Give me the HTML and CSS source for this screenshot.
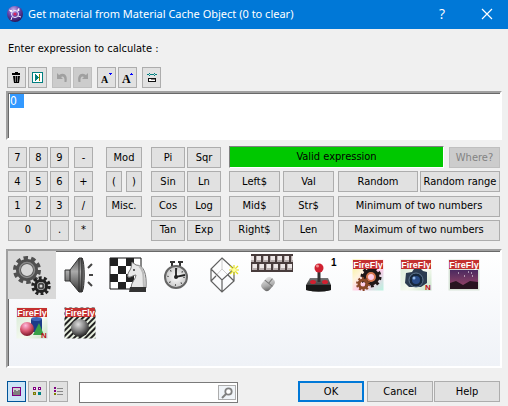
FILE: index.html
```html
<!DOCTYPE html>
<html lang="en">
<head>
<meta charset="utf-8">
<title>Get material from Material Cache Object (0 to clear)</title>
<link rel="stylesheet" href="styles.css">
</head>
<body>
<header class="titlebar">
  <svg class="app-icon" width="16" height="16" viewBox="0 0 16 16" aria-hidden="true">
    <defs><radialGradient id="orb" cx=".4" cy=".25" r=".8"><stop offset="0" stop-color="#c9b6ee"/><stop offset=".45" stop-color="#6a48b0"/><stop offset="1" stop-color="#25104f"/></radialGradient></defs>
    <circle cx="8" cy="8" r="8" fill="url(#orb)"/>
    <g fill="none" stroke="#f0e8ff" stroke-width="1"><circle cx="8" cy="8" r="3.500"/><path d="M5 5L2 4M11 5l1-3M11 10l3 1M5 11l-1 3"/></g>
    <circle cx="8" cy="8" r="1.600" fill="#d8265a"/><circle cx="4" cy="5" r="1.100" fill="#fff"/><circle cx="11.500" cy="4" r="1.100" fill="#fff"/>
  </svg>
  <h1 class="title">Get material from Material Cache Object (0 to clear)</h1>
  <button class="caption" aria-label="Context help">?</button>
  <button class="caption" aria-label="Close"><svg width="12" height="12" viewBox="0 0 12 12"><path d="M1 1l10 10M11 1L1 11" stroke="#fff" stroke-width="1.200"/></svg></button>
</header>
<main class="dialog">
  <label class="prompt" for="expr">Enter expression to calculate :</label>
  <div class="toolbar">
    <button class="btn tool" aria-label="Clear"><svg width="12" height="12" viewBox="0 0 12 12"><path d="M4 0h3v1h2v2H1V1h3zM2 4h7l-1 7H3z" fill="#000"/><path d="M4.500 4v6M6.500 4v6" stroke="#aaa" stroke-width=".7"/></svg></button>
    <button class="btn tool" aria-label="Insert"><svg width="11" height="11" viewBox="0 0 11 11" shape-rendering="crispEdges"><path d="M.5.500h10v10H.5z" fill="#fff" stroke="#008080"/><path d="M3 2h1v1h1v1h1v1h1v1H6v1H5v1H4v1H3z" fill="#008080"/><path d="M7 2h1v7H7z" fill="#808000"/></svg></button>
    <button class="btn tool apart" disabled aria-label="Undo"><svg width="12" height="12" viewBox="0 0 12 12"><path d="M1 1v6h6L5 5c2-1.500 4 0 3.500 5h2C12 3 8 0 3 3z" fill="#a0a0a0"/></svg></button>
    <button class="btn tool" disabled aria-label="Redo"><svg width="12" height="12" viewBox="0 0 12 12"><path d="M11 1v6H5l2-2C5 3.500 3 5 3.500 10h-2C0 3 4 0 9 3z" fill="#a0a0a0"/></svg></button>
    <button class="btn tool apart" aria-label="Smaller font"><svg width="17" height="19" viewBox="0 0 17 19"><text x="3" y="15" class="glyph">A</text><path d="M11 5h3v1h-1v1h-1V6h-1z" fill="#00f"/></svg></button>
    <button class="btn tool" aria-label="Larger font"><svg width="17" height="19" viewBox="0 0 17 19"><text x="3" y="15" class="glyph big">A</text><path d="M11 6h1V5h1v1h1v1h-3z" fill="#00f"/></svg></button>
    <button class="btn tool apart" aria-label="Insert field"><svg width="10" height="11" viewBox="0 0 10 11" shape-rendering="crispEdges"><path d="M1 3h8v-1H1zM2 1h1v3H2zM7 1h1v3H7zM0 2h1v1H0zM9 2h1v1H9z" fill="#008080"/><path d="M1.500 6.500h7v3h-7z" fill="#fff" stroke="#111"/><path d="M4 7h4v1H4z" fill="#888"/></svg></button>
  </div>
  <textarea class="sunken expr" id="expr" spellcheck="false" autofocus>0  </textarea>

  <section class="keypad" aria-label="Calculator keys">
    <div class="keys digits">
      <button class="btn">7</button><button class="btn">8</button><button class="btn">9</button>
      <button class="btn">4</button><button class="btn">5</button><button class="btn">6</button>
      <button class="btn">1</button><button class="btn">2</button><button class="btn">3</button>
      <button class="btn wide">0</button><button class="btn">.</button>
    </div>
    <div class="keys ops"><button class="btn">-</button><button class="btn">+</button><button class="btn">/</button><button class="btn">*</button></div>
    <div class="keys misc"><button class="btn wide">Mod</button><button class="btn">(</button><button class="btn">)</button><button class="btn wide">Misc.</button></div>
    <div class="keys trig">
      <button class="btn">Pi</button><button class="btn">Sqr</button>
      <button class="btn">Sin</button><button class="btn">Ln</button>
      <button class="btn">Cos</button><button class="btn">Log</button>
      <button class="btn">Tan</button><button class="btn">Exp</button>
    </div>
    <div class="functions">
      <div class="row"><output class="status">Valid expression</output><button class="btn where" disabled>Where?</button></div>
      <div class="row"><button class="btn str">Left$</button><button class="btn str">Val</button><span class="pair"><button class="btn">Random</button><button class="btn">Random range</button></span></div>
      <div class="row"><button class="btn str">Mid$</button><button class="btn str">Str$</button><span class="pair"><button class="btn">Minimum of two numbers</button></span></div>
      <div class="row"><button class="btn str">Right$</button><button class="btn str">Len</button><span class="pair"><button class="btn">Maximum of two numbers</button></span></div>
    </div>
  </section>

  <section class="sunken objects" aria-label="Objects">
    <svg class="defs" width="0" height="0" aria-hidden="true"><defs>
      <linearGradient id="steel" x1="0" y1="0" x2="1" y2="1"><stop offset="0" stop-color="#eee"/><stop offset=".6" stop-color="#aaa"/><stop offset="1" stop-color="#555"/></linearGradient>
      <linearGradient id="dark" x1="0" y1="0" x2="0" y2="1"><stop offset="0" stop-color="#777"/><stop offset="1" stop-color="#111"/></linearGradient>
      <linearGradient id="cone" x1="0" y1="0" x2="0" y2="1"><stop offset="0" stop-color="#555"/><stop offset=".4" stop-color="#aaa"/><stop offset="1" stop-color="#333"/></linearGradient>
      <linearGradient id="rainbow" x1="0" y1="0" x2="1" y2="1"><stop offset="0" stop-color="#f4f08a"/><stop offset=".35" stop-color="#fff4dc"/><stop offset=".6" stop-color="#ffc8e8"/><stop offset="1" stop-color="#b8f4e0"/></linearGradient>
      <linearGradient id="mint" x1="0" y1="0" x2="1" y2="1"><stop offset="0" stop-color="#d4e8d4"/><stop offset=".6" stop-color="#f6faf0"/><stop offset="1" stop-color="#c4e0c4"/></linearGradient>
      <linearGradient id="dusk" x1="0" y1="0" x2="0" y2="1"><stop offset="0" stop-color="#4a2a60"/><stop offset="1" stop-color="#a04868"/></linearGradient>
      <radialGradient id="ball" cx=".4" cy=".3" r=".7"><stop offset="0" stop-color="#ddd"/><stop offset=".5" stop-color="#888"/><stop offset="1" stop-color="#222"/></radialGradient>
      <radialGradient id="pink" cx=".4" cy=".25" r=".8"><stop offset="0" stop-color="#fbd"/><stop offset=".5" stop-color="#d85870"/><stop offset="1" stop-color="#701020"/></radialGradient>
      <radialGradient id="face"><stop offset="0" stop-color="#fff"/><stop offset="1" stop-color="#c8c8c8"/></radialGradient>
      <pattern id="stripes" width="4" height="4" patternUnits="userSpaceOnUse" patternTransform="rotate(45)"><path d="M0 0h4v4H0z" fill="#e8f0e0"/><path d="M0 0h2v4H0z" fill="#222"/></pattern>
      <pattern id="keytop" width="7" height="8" patternUnits="userSpaceOnUse" patternTransform="translate(-3 1)"><path d="M0 0h7v8H0z" fill="#483c3c"/><path d="M1 1h5v6H1z" fill="#b8aeae"/><path d="M2 1h4v4H2z" fill="#ece6e6"/></pattern>
      <pattern id="keylow" width="7" height="8" patternUnits="userSpaceOnUse" patternTransform="translate(0 1)"><path d="M0 0h7v8H0z" fill="#483c3c"/><path d="M1 1h5v6H1z" fill="#b8aeae"/><path d="M2 1h4v4H2z" fill="#ece6e6"/></pattern>
      <symbol id="banner" viewBox="0 0 32 32"><path d="M1 1h30v9H1z" fill="#c43030"/><text x="16" y="9" text-anchor="middle" class="brand">FireFly</text></symbol>
    </defs></svg>

    <button class="cell selected" aria-label="Settings"><svg width="40" height="40" viewBox="0 0 40 40">
      <g fill="none"><circle cx="15" cy="15" r="8.500" stroke="#505050" stroke-width="5"/><circle cx="15" cy="15" r="12" stroke="#505050" stroke-width="4" stroke-dasharray="4.400 3.140"/><circle cx="15" cy="15" r="7.500" stroke="#8a8a8a" stroke-width="1.500"/>
      <circle cx="29" cy="31" r="5.500" stroke="#222" stroke-width="3"/><circle cx="29" cy="31" r="8" stroke="#222" stroke-width="3.500" stroke-dasharray="2.900 2.130"/><circle cx="29" cy="31" r="2.500" stroke="#444" stroke-width="2"/></g></svg></button>
    <button class="cell" aria-label="Sound"><svg width="32" height="36" viewBox="0 0 32 36">
      <path d="M1 13h5L15 1h3v34h-3L6 24H1z" fill="url(#cone)" stroke="#333"/><path d="M6 13v11" stroke="#222"/><path d="M15 1v34" stroke="#333"/><path d="M18 1c3 4 3 30 0 34z" fill="#777" stroke="#333"/>
      <path d="M24 11l4-4M25 18h4M24 25l4 4" stroke="#444" stroke-width="2"/></svg></button>
    <button class="cell" aria-label="Chess board"><svg width="38" height="36" viewBox="0 0 38 36">
      <path d="M1 1h31v31H1z" fill="#fff" stroke="#111"/><path d="M1 1h8v8H1zM17 1h8v8h-8zM9 9h8v8H9zM25 9h7v8h-7zM1 17h8v8H1zM17 17h8v8h-8zM9 25h8v7H9z" fill="#222"/>
      <path d="M22 31c0-6 5-9 5-13-3 0-5 3-8 2-1-4 2-6 3-9l1-6 4 3c8 0 11 9 10 23z" fill="#e8e8e8" stroke="#777"/><path d="M30 9c6 5 4 12 5 21" stroke="#bbb" stroke-width="2" fill="none"/><circle cx="25" cy="13" r="1" fill="#333"/><path d="M21 30h16v5H20z" fill="#333"/></svg></button>
    <button class="cell" aria-label="Timer"><svg width="26" height="28" viewBox="0 0 26 28">
      <path d="M7 1h5M15 1h5M9 1v4M17 1v4" stroke="#333" stroke-width="2"/><circle cx="13" cy="16" r="11" fill="url(#face)" stroke="#666" stroke-width="2"/><circle cx="13" cy="16" r="8" fill="none" stroke="#333" stroke-width="1.500" stroke-dasharray="1 5.280"/><path d="M13 7v9l9-2" fill="none" stroke="#222" stroke-width="1.800"/><circle cx="13" cy="16" r="2" fill="#222"/></svg></button>
    <button class="cell" aria-label="3D shape"><svg width="30" height="36" viewBox="0 0 30 36">
      <path d="M13 12L2 24M13 12l12 12M13 1v11" stroke="#ccc"/><path d="M13 1l12 11v12L13 35 2 24V12zM2 12l11 11 12-11M13 23v12M2 24l5-5M25 24l-6-6" fill="none" stroke="#606060" stroke-width="1.200"/><path d="M25 8v10M20 13h10M21 9l8 8M29 9l-8 8" stroke="#e4e020" stroke-width="1.200"/><circle cx="25" cy="13" r="2" fill="#ffffa0"/></svg></button>
    <button class="cell" aria-label="Keyboard and mouse"><svg width="42" height="42" viewBox="0 0 42 42">
      <path d="M0 1h42v8H0z" fill="url(#keytop)"/><path d="M0 9h42v9H0z" fill="url(#keylow)"/><path d="M0 0h42v1H0zM0 17h42v1H0z" fill="#483c3c"/>
      <g transform="rotate(40 17 30)"><rect x="12" y="23" width="10" height="14" rx="4" fill="url(#steel)"/><path d="M12 29h10M17 23v6" stroke="#777"/></g></svg></button>
    <button class="cell" aria-label="Joystick 1"><svg width="34" height="36" viewBox="0 0 34 36">
      <path d="M7 21h18l3 7v5q-12 3-25 0v-5z" fill="url(#dark)"/><path d="M3 28h25v5q-12 3-25 0z" fill="#181818"/><ellipse cx="10" cy="25" rx="3" ry="2" fill="#d02030"/><ellipse cx="22" cy="25" rx="3" ry="2" fill="#d02030"/><path d="M16 13v12" stroke="#333" stroke-width="3"/><circle cx="16" cy="11" r="4.500" fill="#d02030"/><circle cx="14.500" cy="9" r="1.500" fill="#f09090"/><text x="28" y="9" class="index">1</text></svg></button>
    <button class="cell" aria-label="FireFly gears"><svg width="32" height="32" viewBox="0 0 32 32">
      <path d="M.5.500h31v31H.5z" fill="url(#rainbow)"/><g fill="none"><circle cx="19" cy="18" r="6" stroke="#201818" stroke-width="5"/><circle cx="19" cy="18" r="9" stroke="#201818" stroke-width="3" stroke-dasharray="2.900 2.750"/><circle cx="19" cy="18" r="4" stroke="#d87850" stroke-width="2"/><circle cx="11" cy="25" r="4" stroke="#8a4828" stroke-width="3"/><circle cx="11" cy="25" r="6" stroke="#8a4828" stroke-width="2" stroke-dasharray="2 1.770"/></g><use href="#banner"/></svg></button>
    <button class="cell" aria-label="FireFly camera"><svg width="32" height="32" viewBox="0 0 32 32">
      <path d="M.5.500h31v31H.5z" fill="url(#mint)"/><path d="M6 14l6-1 2-3h7l2 2 4 1v11l-6 4H9l-4-4z" fill="#2c3c50"/><circle cx="16" cy="21" r="7" fill="#16283c" stroke="#607890"/><circle cx="16" cy="21" r="4" fill="#284c88"/><circle cx="14" cy="19" r="1.500" fill="#90b8e8"/><use href="#banner"/><text x="28" y="31" class="new">N</text></svg></button>
    <button class="cell" aria-label="FireFly sky"><svg width="32" height="32" viewBox="0 0 32 32">
      <path d="M.5.500h31v31H.5z" fill="#d8e4d8"/><path d="M2 11h28v19H2z" fill="url(#dusk)"/><path d="M2 24l6-2 7 4 7-4 8 1v7H2z" fill="#281420"/><path d="M10 14h1M20 13h1M16 17h1M24 17h1M23 14h1" stroke="#fff"/><use href="#banner"/></svg></button>
    <button class="cell" aria-label="FireFly shapes"><svg width="32" height="32" viewBox="0 0 32 32">
      <path d="M.5.500h31v31H.5z" fill="url(#mint)"/><path d="M15 12h11v13H15z" fill="#1c3c88"/><ellipse cx="20.500" cy="12" rx="5.500" ry="2" fill="#3c64b8"/><circle cx="11" cy="22" r="7" fill="url(#pink)"/><path d="M23 16l5 12H17z" fill="#38a048"/><use href="#banner"/><text x="28" y="31" class="new">N</text></svg></button>
    <button class="cell" aria-label="FireFly material"><svg width="32" height="32" viewBox="0 0 32 32">
      <path d="M.5.500h31v31H.5z" fill="url(#stripes)"/><circle cx="16" cy="21" r="9" fill="url(#ball)"/><use href="#banner"/></svg></button>
  </section>

  <footer class="footer">
    <button class="btn tool active" aria-label="Large icons"><svg width="9" height="9" viewBox="0 0 9 9" shape-rendering="crispEdges"><path d="M.5.500h8v8h-8z" fill="#808080" stroke="#800080"/><path d="M1 1h7v2H6v1H4V3H2v2H1z" fill="#d0d0d0"/></svg></button>
    <button class="btn tool" aria-label="Small icons"><svg width="9" height="9" viewBox="0 0 9 9" shape-rendering="crispEdges"><g fill="#fff"><path d="M.5.500h2v2h-2zM5.500.500h2v2h-2z" stroke="#800080"/><path d="M.5 5.500h2v2h-2z" fill="#aaa" stroke="#808000"/><path d="M5.500 5.500h2v2h-2z" fill="#088" stroke="#008080"/></g></svg></button>
    <button class="btn tool" aria-label="List"><svg width="9" height="9" viewBox="0 0 9 9" shape-rendering="crispEdges"><path d="M0 0h2v2H0zM0 3h2v2H0z" fill="#800080"/><path d="M0 6h2v2H0z" fill="#808000"/><path d="M3 1h6M3 4h6M3 7h6" stroke="#888"/></svg></button>
    <div class="search"><input type="text" aria-label="Search objects"><button class="find" aria-label="Find"><svg width="12" height="12" viewBox="0 0 12 12"><circle cx="7.500" cy="4.500" r="3.200" fill="#fff" stroke="#808080" stroke-width="1.800"/><path d="M5 7l-4 4" stroke="#808080" stroke-width="2"/></svg></button></div>
    <div class="actions"><button class="btn ok">OK</button><button class="btn">Cancel</button><button class="btn">Help</button></div>
  </footer>
</main>
<script src="main.js"></script>
</body>
</html>
```
FILE: styles.css
```css
* { box-sizing: border-box; }
body {
  margin: 0;
  min-height: 100vh;
  display: flex;
  flex-direction: column;
  background: #f0f0f0;
  color: #000;
  font: 11px/14px "DejaVu Sans Condensed", "Noto Sans", sans-serif;
}
button, input, textarea { font: inherit; color: inherit; }
button { padding: 0; }
svg { display: block; flex: none; }

.titlebar {
  display: flex;
  align-items: center;
  height: 29px;
  padding: 0 6px 2px 7px;
  background: #0078d7;
  color: #fff;
}
.title {
  flex: 1;
  margin: 0 0 0 5px;
  font: 11px/16px "Noto Sans", "Open Sans", sans-serif;
  white-space: nowrap;
}
.caption {
  display: grid;
  place-items: center;
  width: 30px;
  height: 24px;
  border: 0;
  background: none;
  font: 14px/16px "Open Sans", sans-serif;
}
.caption + .caption { margin-left: 15px; }

.dialog {
  flex: 1;
  display: flex;
  flex-direction: column;
  padding: 13px 6px 3px;
}
.prompt { padding-left: 2px; white-space: nowrap; }
.btn {
  display: flex;
  align-items: center;
  justify-content: center;
  min-width: 0;
  height: 21px;
  border: 1px solid #adadad;
  background: #e1e1e1;
  white-space: nowrap;
}
.btn:disabled { background: #ccc; border-color: #bfbfbf; color: #838383; }
.tool { width: 19px; }
.toolbar { display: flex; gap: 2px; margin: 11px 0 3px 1px; }
.apart { margin-left: 3px; }
.glyph { font: bold 10px "Liberation Serif", serif; }
.big { font-size: 12px; }

.sunken {
  border: 2px solid;
  border-color: #a0a0a0 #fff #fff #a0a0a0;
  box-shadow: inset 1px 1px #696969;
}
.expr {
  display: block;
  width: 100%;
  height: 49px;
  padding: 1px 2px;
  resize: none;
  outline: 0;
  background: #fff;
  font-size: 12px;
}
.expr::selection { background: #3399ff; color: #fff; }

.keypad { display: flex; margin: 6px 2px 8px; height: 95px; }
.keys {
  display: grid;
  grid-template-rows: repeat(4, 21px);
  align-content: space-between;
  column-gap: 2px;
  padding-top: 1px;
}
.digits { grid-template-columns: repeat(3, 19px); }
.ops { grid-template-columns: 19px; margin-left: 5px; }
.misc { grid-template-columns: 16px 16px; column-gap: 4px; margin-left: 13px; }
.trig { grid-template-columns: 34px 34px; margin-left: 9px; }
.wide { grid-column: span 2; }
.functions {
  flex: 1;
  display: flex;
  flex-direction: column;
  justify-content: space-between;
  margin-left: 8px;
}
.row { display: flex; gap: 3px; }
.status {
  flex: 1;
  height: 22px;
  border: 1px solid;
  border-color: #808080 #fff #fff #808080;
  background: #00c800;
  line-height: 20px;
  text-align: center;
}
.where { width: 51px; margin: 1px 0 0 2px; }
.str { width: 51px; }
.pair { flex: 1; display: flex; gap: 2px; margin-left: 1px; }
.pair .btn { flex: 1; }

.objects {
  flex: 1;
  display: grid;
  grid-template-columns: repeat(auto-fill, 48px);
  grid-auto-rows: 48px;
  align-content: start;
  min-height: 100px;
  background: linear-gradient(#fff, #eff2f7);
}
.defs { position: absolute; }
.cell {
  display: grid;
  place-items: center;
  border: 0;
  background: none;
}
.selected { background: #d9d9d9; }
.brand { font: bold 9px "Liberation Sans", sans-serif; fill: #fff; }
.new { font: bold 8px "Liberation Sans", sans-serif; fill: #c01020; text-anchor: middle; }
.index { font: bold 10px "Liberation Sans", sans-serif; }

.footer { display: flex; gap: 2px; margin-top: 13px; padding: 0 2px 0 1px; }
.active { background: #cce4f7; border-color: #005499; }
.search {
  display: flex;
  align-items: center;
  width: 159px;
  height: 21px;
  margin: 1px 0 0 9px;
  padding-right: 1px;
  border: 1px solid #7a7a7a;
  background: #fff;
}
.search input { flex: 1; min-width: 0; border: 0; outline: 0; background: none; }
.find {
  display: grid;
  place-items: center;
  width: 18px;
  height: 15px;
  border: 1px solid #adadad;
  background: #f0f4f8;
}
.actions { display: flex; gap: 1px; margin-left: auto; }
.actions .btn { width: 66px; }
.actions .ok { border: 2px solid #0078d7; margin-right: 2px; }
```
FILE: main.js
```js
const expression = document.getElementById('expr');
expression.focus();
expression.select();
```
